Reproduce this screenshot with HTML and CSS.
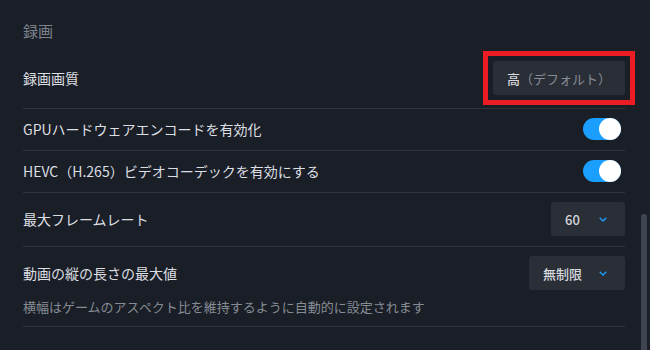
FILE: index.html
```html
<!DOCTYPE html>
<html lang="ja">
<head>
<meta charset="utf-8">
<link rel="stylesheet" href="styles.css">
</head>
<body>
<div class="page">
  <div class="section-title">録画</div>
  <div class="row row-first">
    <div class="label">録画画質</div>
    <div class="select select-wide highlighted"><span class="val">高</span><span class="muted">（デフォルト）</span></div>
  </div>
  <div class="row">
    <div class="label">GPUハードウェアエンコードを有効化</div>
    <div class="toggle"><div class="knob"></div></div>
  </div>
  <div class="row">
    <div class="label">HEVC（H.265）ビデオコーデックを有効にする</div>
    <div class="toggle"><div class="knob"></div></div>
  </div>
  <div class="row">
    <div class="label">最大フレームレート</div>
    <div class="select select-fps"><span class="val">60</span><svg class="chev" width="8" height="5" viewBox="0 0 8 5"><polyline points="0.7,0.7 4,4 7.3,0.7" fill="none" stroke="#1a9fff" stroke-width="1.3"/></svg></div>
  </div>
  <div class="row row-col">
    <div class="row-main">
      <div class="label">動画の縦の長さの最大値</div>
      <div class="select select-res"><span class="val">無制限</span><svg class="chev" width="8" height="5" viewBox="0 0 8 5"><polyline points="0.7,0.7 4,4 7.3,0.7" fill="none" stroke="#1a9fff" stroke-width="1.3"/></svg></div>
    </div>
    <div class="desc">横幅はゲームのアスペクト比を維持するように自動的に設定されます</div>
  </div>
</div>
<div class="scrollbar"></div>
</body>
</html>
```
FILE: styles.css
```css
html, body {
  margin: 0;
  padding: 0;
  background: #1a1e26;
  width: 650px;
  height: 350px;
  overflow: hidden;
  font-family: "Noto Sans CJK JP", "Noto Sans", sans-serif;
}
.page {
  width: 602px;
  padding: 21px 0 0 23px;
}
.section-title {
  font-size: 15px;
  line-height: 20px;
  color: #7d838c;
}
.row {
  display: flex;
  align-items: center;
  justify-content: space-between;
  padding: 9px 0 10px;
  border-bottom: 1px solid #2e333c;
}
.row-first {
  margin-top: 11px;
  padding-bottom: 13px;
}
.row-col {
  flex-direction: column;
  align-items: stretch;
}
.row-main {
  display: flex;
  align-items: center;
  justify-content: space-between;
}
.label {
  font-size: 14px;
  line-height: 20px;
  color: #dcdfe3;
}
.desc {
  margin-top: 8px;
  font-size: 13px;
  line-height: 18px;
  color: #868c95;
}
.select {
  height: 34px;
  box-sizing: border-box;
  background: #2a2e36;
  border-radius: 3px;
  display: flex;
  align-items: center;
  padding: 0 18px 0 14px;
  font-size: 13px;
  color: #d6d9dd;
}
.select .val {
  font-weight: 500;
}
.select .chev {
  margin-left: auto;
  display: block;
}
.select-fps {
  width: 74px;
}
.select-res {
  width: 96px;
}
.select-wide {
  width: 132px;
  padding-right: 0;
}
.select .muted {
  color: #878d96;
}
.highlighted {
  position: relative;
}
.highlighted::after {
  content: "";
  position: absolute;
  left: -10px;
  top: -10px;
  right: -10px;
  bottom: -10px;
  border: 5px solid #ec1c24;
}
.toggle {
  width: 38px;
  height: 22px;
  border-radius: 11px;
  background: #1a9fff;
  position: relative;
  margin-right: 4px;
}
.knob {
  position: absolute;
  right: 0;
  top: 0;
  width: 22px;
  height: 22px;
  border-radius: 50%;
  background: #ffffff;
}
.scrollbar {
  position: absolute;
  left: 641px;
  top: 214px;
  width: 6px;
  height: 140px;
  border-radius: 3px;
  background: #3e4550;
}
```
